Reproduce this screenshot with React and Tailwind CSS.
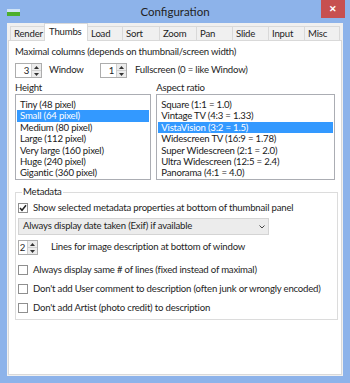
import React from 'react';

const font = { fontFamily: 'Lato, "Noto Sans", sans-serif' };

const tabs = ['Render', 'Thumbs', 'Load', 'Sort', 'Zoom', 'Pan', 'Slide', 'Input', 'Misc'];
const tabWidths = [35, 44, 36, 38, 38, 37, 37, 37, 36];

const heights = [
  'Tiny (48 pixel)',
  'Small (64 pixel)',
  'Medium (80 pixel)',
  'Large (112 pixel)',
  'Very large (160 pixel)',
  'Huge (240 pixel)',
  'Gigantic (360 pixel)',
];

const ratios = [
  'Square (1:1 = 1.0)',
  'Vintage TV (4:3 = 1.33)',
  'VistaVision (3:2 = 1.5)',
  'Widescreen TV (16:9 = 1.78)',
  'Super Widescreen (2:1 = 2.0)',
  'Ultra Widescreen (12:5 = 2.4)',
  'Panorama (4:1 = 4.0)',
];

const Spinner = ({ value, w = 'w-[27px]' }) => (
  <div className={`flex h-[15px] ${w} items-stretch border border-[#adadad] bg-white`}>
    <span className="flex-1 pr-[2px] text-right leading-[13px]">{value}</span>
    <div className="flex w-[10px] flex-col border-l border-[#cfcfcf] bg-[#ececec]">
      <div className="flex flex-1 items-center justify-center border-b border-[#cfcfcf]">
        <svg width="5" height="3" viewBox="0 0 5 3"><path d="M0 3 L2.5 0 L5 3Z" fill="#333" /></svg>
      </div>
      <div className="flex flex-1 items-center justify-center">
        <svg width="5" height="3" viewBox="0 0 5 3"><path d="M0 0 L2.5 3 L5 0Z" fill="#333" /></svg>
      </div>
    </div>
  </div>
);

const ListBox = ({ items, selected, className }) => (
  <div className={`flex flex-col border border-[#abadb3] bg-white px-[1px] py-[4px] ${className}`}>
    {items.map((it, i) => (
      <div
        key={it}
        className={`h-[11.4px] whitespace-nowrap pl-[3px] leading-[11.4px] ${i === selected ? 'bg-[#3399ff] text-white' : 'text-[#1a1a1a]'}`}
      >
        {it}
      </div>
    ))}
  </div>
);

const Check = ({ checked, label }) => (
  <div className="flex items-center gap-[5px] whitespace-nowrap">
    <div className="flex h-[10px] w-[10px] items-center justify-center border border-[#8f8f8f] bg-white">
      {checked && (
        <svg width="8" height="8" viewBox="0 0 8 8">
          <path d="M1 4 L3 6.3 L7 1.3" stroke="#222" strokeWidth="1.5" fill="none" />
        </svg>
      )}
    </div>
    <span className="leading-[12px]">{label}</span>
  </div>
);

export default function App() {
  return (
    <div className="flex h-[383px] w-[350px] flex-col bg-[#8db3ea] text-[9.6px] tracking-[-0.2px] text-[#1e1e1e]" style={font}>
      {/* title bar */}
      <div className="relative flex h-[23px] items-center justify-center">
        <div className="absolute left-[7px] top-[9px] flex h-[7px] w-[13px] flex-col">
          <div className="h-[3px] bg-[#cfe3f5]" />
          <div className="h-[4px] bg-[#4caf2c]" />
        </div>
        <span className="text-[11.5px] tracking-normal text-[#222]">Configuration</span>
        <div className="absolute right-[5px] top-0 flex h-[18px] w-[24px] items-center justify-center bg-[#c75050] text-[9px] font-bold text-white">
          ✕
        </div>
      </div>

      {/* client area */}
      <div className="mx-[7px] mb-[7px] flex flex-1 flex-col bg-[#f0f0f0] px-[1px] pb-[1px]">
        {/* tabs */}
        <div className="flex h-[17px] items-end pl-[3px]">
          {tabs.map((t, i) => (
            <div
              key={t}
              style={{ width: tabWidths[i] }}
              className={
                t === 'Thumbs'
                  ? 'relative z-10 -mb-[1px] -ml-[1px] h-[18px] border border-b-0 border-[#d9d9d9] bg-white pl-[4px] pt-[2px] leading-[12px]'
                  : 'h-[14px] -ml-[1px] border border-b-0 border-[#d9d9d9] bg-[#f0f0f0] pl-[3px] leading-[13px]'
              }
            >
              {t}
            </div>
          ))}
        </div>

        {/* panel */}
        <div className="flex flex-1 flex-col border border-[#d9d9d9] bg-white px-[6px] pt-[5px]">
          <div className="leading-[12px]">Maximal columns (depends on thumbnail/screen width)</div>
          <div className="mt-[5px] flex items-center">
            <Spinner value="3" />
            <span className="ml-[7px] w-[51px]">Window</span>
            <Spinner value="1" />
            <span className="ml-[8px]">Fullscreen (0 = like Window)</span>
          </div>

          <div className="mt-[3px] flex gap-[5px]">
            <div className="flex w-[138px] flex-col">
              <span className="leading-[13px]">Height</span>
              <ListBox items={heights} selected={1} className="h-[86px]" />
            </div>
            <div className="flex w-[181px] flex-col">
              <span className="leading-[13px]">Aspect ratio</span>
              <ListBox items={ratios} selected={2} className="h-[86px]" />
            </div>
          </div>

          {/* metadata group */}
          <div className="relative mt-[12px] h-[128px] w-[323px] border border-[#dcdcdc] px-[2px] pt-[9px]">
            <span className="absolute -top-[7px] left-[6px] bg-white px-[1px] leading-[12px]">Metadata</span>
            <Check checked label="Show selected metadata properties at bottom of thumbnail panel" />
            <div className="mt-[4px] flex h-[17px] w-[251px] items-center justify-between border border-[#d4d4d4] bg-[#ececec] pl-[4px] pr-[3px]">
              <span>Always display date taken (Exif) if available</span>
              <svg width="6" height="4" viewBox="0 0 6 4"><path d="M0.5 0.5 L3 3 L5.5 0.5" stroke="#444" fill="none" /></svg>
            </div>
            <div className="mt-[5px] flex items-center">
              <Spinner value="2" w="w-[20px]" />
              <span className="ml-[13px]">Lines for image description at bottom of window</span>
            </div>
            <div className="mt-[9px] flex flex-col gap-[7px]">
              <Check label="Always display same # of lines (fixed instead of maximal)" />
              <Check label="Don't add User comment to description (often junk or wrongly encoded)" />
              <Check label="Don't add Artist (photo credit) to description" />
            </div>
          </div>
        </div>
      </div>
    </div>
  );
}
